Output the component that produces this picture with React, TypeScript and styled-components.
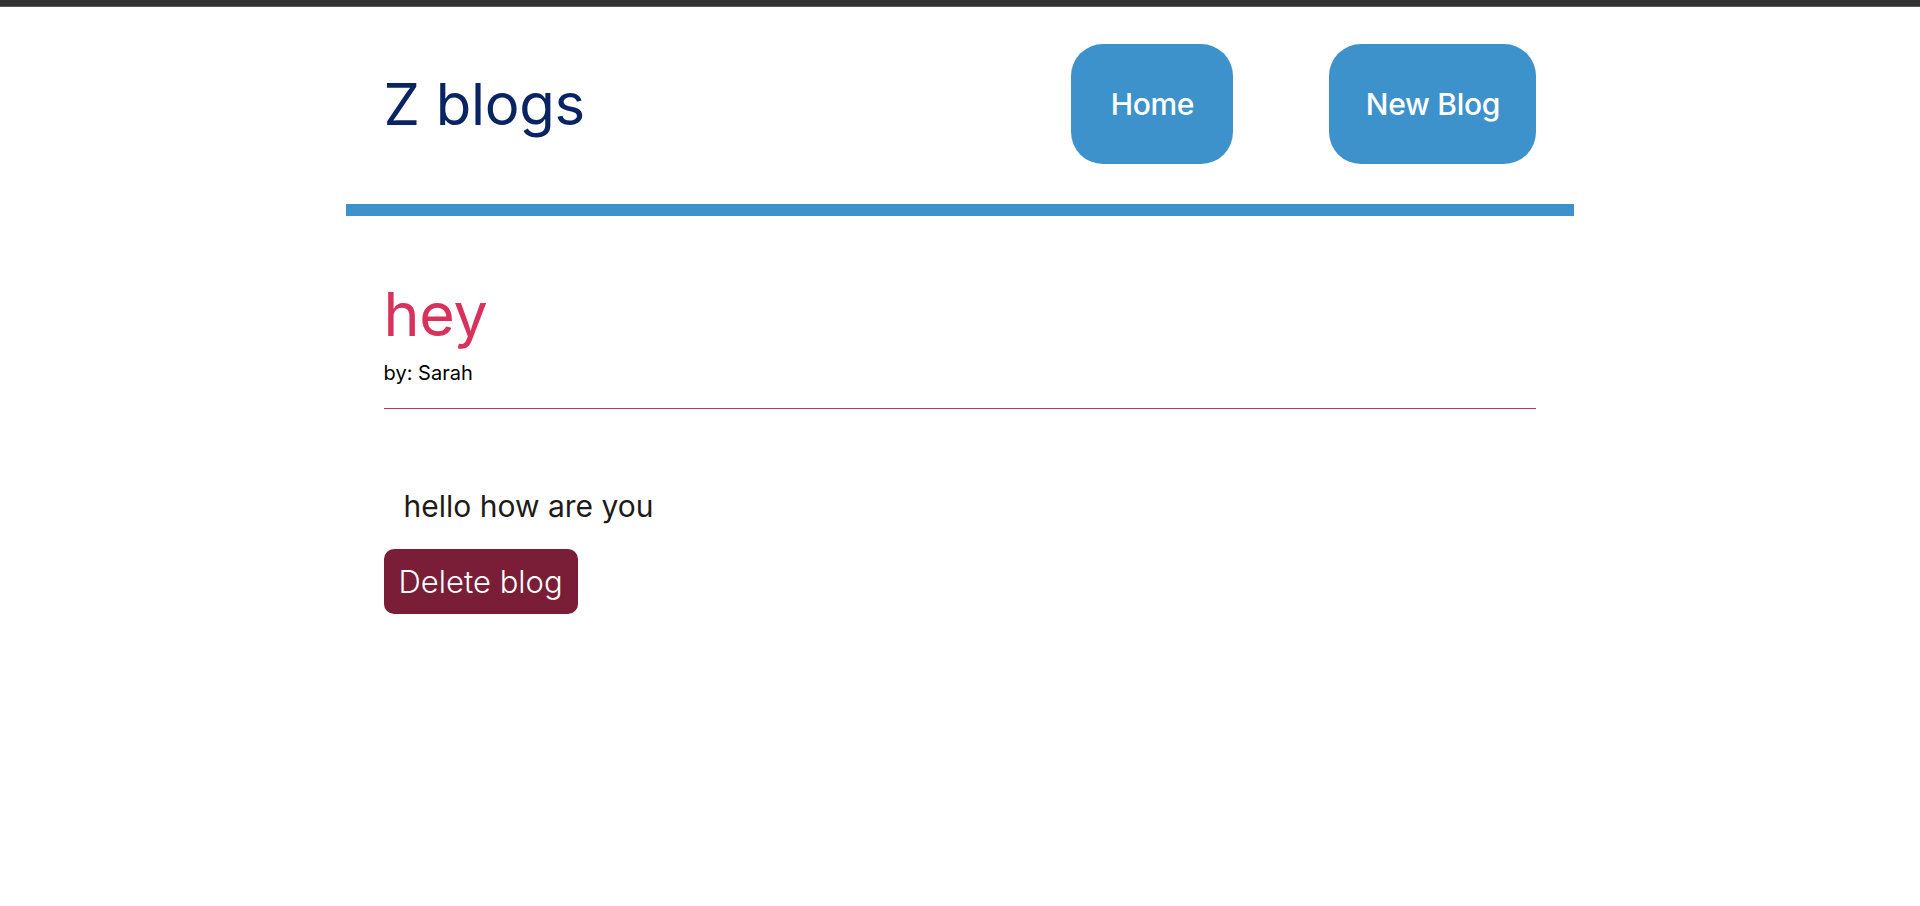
import React from "react";
import styled, { createGlobalStyle } from "styled-components";

const GlobalStyle = createGlobalStyle`
  html, body {
    margin: 0;
    padding: 0;
    background: #ffffff;
  }
  body {
    font-family: "Inter", "Open Sans", sans-serif;
    color: #1e1b18;
  }
  * { box-sizing: border-box; }
`;

const TopStrip = styled.div`
  height: 7px;
  background: #333333;
  border-bottom: 1px solid #5a5a5a;
`;

const Navbar = styled.nav`
  width: 64%;
  margin: 0 auto;
  padding: 37px 38px 40px;
  display: flex;
  align-items: center;
  border-bottom: 12px solid #3e92cc;
`;

const Brand = styled.h1`
  margin: 0;
  font-size: 58px;
  font-weight: 400;
  color: #0a2463;
  letter-spacing: -0.3px;
`;

const Links = styled.div`
  margin-left: auto;
  display: flex;
  gap: 96px;
`;

const NavButton = styled.a<{ $w: number }>`
  display: flex;
  align-items: center;
  justify-content: center;
  width: ${(p) => p.$w}px;
  height: 120px;
  border-radius: 32px;
  background: #3e92cc;
  color: #ffffff;
  font-size: 30px;
  font-weight: 500;
  letter-spacing: -0.3px;
  text-decoration: none;
`;

const Content = styled.main`
  width: 64%;
  margin: 0 auto;
  padding: 0 38px;
`;

const BlogHeader = styled.header`
  padding-top: 66px;
  padding-bottom: 22px;
  border-bottom: 1px solid #cf2e57;
`;

const Title = styled.h2`
  margin: 0;
  font-size: 61px;
  line-height: 64px;
  font-weight: 400;
  color: #d8315b;
  letter-spacing: -0.3px;
`;

const Author = styled.p`
  margin: 14px 0 0;
  font-size: 20px;
  line-height: 26px;
  color: #000000;
`;

const Body = styled.div`
  margin: 77px 0 0;
  padding-left: 20px;
  font-size: 30px;
  line-height: 40px;
  color: #1e1b18;
`;

const DeleteButton = styled.button`
  display: block;
  margin-top: 23px;
  width: 194px;
  height: 65px;
  border: 0;
  border-radius: 10px;
  background: #7a1d36;
  color: #ffffff;
  font-family: inherit;
  font-size: 31px;
  font-weight: 300;
  cursor: pointer;
`;

export default function App() {
  return (
    <>
      <GlobalStyle />
      <TopStrip />
      <Navbar>
        <Brand>Z blogs</Brand>
        <Links>
          <NavButton href="#" $w={162}>Home</NavButton>
          <NavButton href="#" $w={207}>New Blog</NavButton>
        </Links>
      </Navbar>
      <Content>
        <BlogHeader>
          <Title>hey</Title>
          <Author>by: Sarah</Author>
        </BlogHeader>
        <Body>hello how are you</Body>
        <DeleteButton>Delete blog</DeleteButton>
      </Content>
    </>
  );
}
